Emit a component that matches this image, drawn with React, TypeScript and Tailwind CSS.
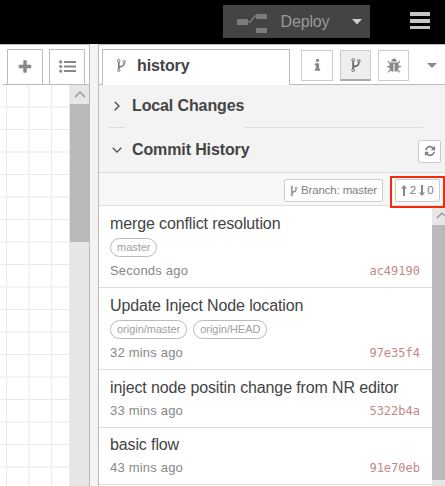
import type { ReactNode } from "react";

const paths = {
  fork: "M672 1472q0-40-28-68t-68-28-68 28-28 68 28 68 68 28 68-28 28-68zm0-1152q0-40-28-68t-68-28-68 28-28 68 28 68 68 28 68-28 28-68zm640 128q0-40-28-68t-68-28-68 28-28 68 28 68 68 28 68-28 28-68zm96 0q0 52-26 96.5t-70 69.5q-2 287-226 414-67 38-203 81-128 40-169.5 71t-41.5 100v26q44 25 70 69.5t26 96.5q0 80-56 136t-136 56-136-56-56-136q0-52 26-96.5t70-69.5v-820q-44-25-70-69.5t-26-96.5q0-80 56-136t136-56 136 56 56 136q0 52-26 96.5t-70 69.5v497q54-26 154-57 55-17 87.5-29.5t70.5-31 59-39.5 40.5-51 28-69.5 8.5-91.5q-44-25-70-69.5t-26-96.5q0-80 56-136t136-56 136 56 56 136z",
  refresh: "M1639 1056q0 5-1 7-64 268-268 434.5t-478 166.5q-146 0-282.5-55t-243.5-157l-129 129q-19 19-45 19t-45-19-19-45v-448q0-26 19-45t45-19h448q26 0 45 19t19 45-19 45l-137 137q71 66 161 102t187 36q134 0 250-65t186-179q11-17 53-117 8-23 30-23h192q13 0 22.5 9.5t9.5 22.5zm25-800v448q0 26-19 45t-45 19h-448q-26 0-45-19t-19-45 19-45l138-138q-148-137-349-137-134 0-250 65t-186 179q-11 17-53 117-8 23-30 23h-199q-13 0-22.5-9.5t-9.5-22.5v-7q65-268 270-434.5t480-166.5q146 0 284 55.5t245 156.5l130-129q19-19 45-19t45 19 19 45z",
  bug: "M1696 960q0 26-19 45t-45 19h-224q0 171-67 290l208 209q19 19 19 45t-19 45q-18 19-45 19t-45-19l-198-197q-5 5-15 13t-42 28.5-65 36.5-82 29-97 13v-896h-128v896q-51 0-101.5-13.5t-87-33-66-39-43.5-32.5l-15-14-183 207q-20 21-48 21-24 0-43-16-19-18-20.5-44.5t15.5-46.5l202-227q-58-114-58-274h-224q-26 0-45-19t-19-45 19-45 45-19h224v-294l-173-173q-19-19-19-45t19-45 45-19 45 19l173 173h844l173-173q19-19 45-19t45 19 19 45-19 45l-173 173v294h224q26 0 45 19t19 45zm-480-576h-640q0-133 93.5-226.5t226.5-93.5 226.5 93.5 93.5 226.5z",
  info: "M1216 1344v128q0 26-19 45t-45 19h-512q-26 0-45-19t-19-45v-128q0-26 19-45t45-19h64v-384h-64q-26 0-45-19t-19-45v-128q0-26 19-45t45-19h384q26 0 45 19t19 45v576h64q26 0 45 19t19 45zm-128-1152v192q0 26-19 45t-45 19h-256q-26 0-45-19t-19-45v-192q0-26 19-45t45-19h256q26 0 45 19t19 45z",
  plus: "M1600 736v192q0 40-28 68t-68 28h-416v416q0 40-28 68t-68 28h-192q-40 0-68-28t-28-68v-416h-416q-40 0-68-28t-28-68v-192q0-40 28-68t68-28h416v-416q0-40 28-68t68-28h192q40 0 68 28t28 68v416h416q40 0 68 28t28 68z",
};

function Icon({ name, className }: { name: keyof typeof paths; className: string }) {
  return (
    <svg viewBox="0 0 1792 1792" fill="currentColor" className={`shrink-0 ${className}`}>
      <path d={paths[name]} />
    </svg>
  );
}

function Header() {
  return (
    <header className="flex h-11 shrink-0 items-start bg-black pl-[223px]">
      <button className="mt-[5px] flex h-[33px] w-[147px] items-center bg-[#444] text-[#999]">
        <svg viewBox="0 0 31 22" className="ml-[14px] h-[22px] w-[31px]">
          <path d="M10 11h3l5-6h3" fill="none" stroke="#7c7c7c" strokeWidth="1.6" />
          <path d="M0 8h11v6H0zM19 3h11v5H19zM19 17h11v5H19z" fill="#7c7c7c" />
        </svg>
        <span className="ml-[12px] w-[50px] text-base tracking-[-0.15px]">Deploy</span>
        <svg viewBox="0 0 10 6" className="ml-[22px] h-[6px] w-[10px]">
          <path d="M0 0h10L5 5.5z" fill="#ccc" />
        </svg>
      </button>
      <button className="mt-3 ml-[40px] flex w-[20px] flex-col gap-[3px]">
        <span className="h-1 w-full bg-[#c7c7c7]" />
        <span className="h-1 w-full bg-[#c7c7c7]" />
        <span className="h-[3px] w-full bg-[#c7c7c7]" />
      </button>
    </header>
  );
}

function ScrollUp({ className }: { className: string }) {
  return (
    <div className={`flex shrink-0 justify-center bg-[#e6e6e6] ${className}`}>
      <svg viewBox="0 0 12 7" className="mt-[6px] h-[7px] w-[12px] shrink-0">
        <path d="M1 6l5-5 5 5" fill="none" stroke="#8c8c8c" strokeWidth="1.2" />
      </svg>
    </div>
  );
}

function Workspace() {
  return (
    <section className="flex w-[90px] shrink-0 flex-col border-t border-r border-[#bbb] bg-white">
      <div className="flex h-10 shrink-0 items-end">
        <div className="h-px w-[3px]" />
        <div className="h-px w-1 bg-[#bbb]" />
        <div className="flex h-9 w-9 items-center justify-center border border-[#bbb] text-[#888]">
          <Icon name="plus" className="size-[16px]" />
        </div>
        <div className="h-px w-[6px] bg-[#bbb]" />
        <div className="flex h-9 w-9 items-center justify-center border border-[#bbb] pb-px">
          <svg viewBox="0 0 17 13" className="h-[13px] w-[17px]" fill="#888">
            <circle cx="1.7" cy="1.9" r="1.6" />
            <circle cx="1.7" cy="6.5" r="1.6" />
            <circle cx="1.7" cy="11.1" r="1.6" />
            <path d="M5 1h12v2H5zM5 5.500h12v2H5zM5 10h12v2H5z" />
          </svg>
        </div>
        <div className="h-px w-1 bg-[#bbb]" />
      </div>
      <div className="flex min-h-0 flex-1">
        <svg className="h-full w-[70px] shrink-0">
          <defs>
            <pattern id="grid" width="45" height="45" patternUnits="userSpaceOnUse">
              <path d="M6 0h1v45H6zM0 44h45v1H0z" fill="#eaeaea" />
              <path d="M28 0h2v45h-2zM0 21h45v2H0z" fill="#f3f3f3" />
            </pattern>
          </defs>
          <rect width="69" height="100%" fill="url(#grid)" />
          <path d="M69.500 0v410" stroke="#eaeaea" />
        </svg>
        <div className="flex w-[19px] flex-col bg-[#e6e6e6]">
          <ScrollUp className="h-[19px]" />
          <div className="h-[138px] bg-[#b9b9b9]" />
        </div>
      </div>
    </section>
  );
}

function SidebarTabs() {
  return (
    <div className="flex h-10 shrink-0 items-end bg-white">
      <div className="h-px w-[3px] bg-[#bbb]" />
      <div className="flex h-9 w-[188px] items-center border-x border-t border-[#bbb] pb-1 text-[#444]">
        <Icon name="fork" className="ml-[11px] size-[15px] text-[#777]" />
        <span className="ml-[8px] text-base leading-5 font-bold tracking-[-0.12px]">history</span>
      </div>
      <div className="flex h-9 flex-1 border-b border-[#bbb] pt-px pl-[11px]">
        <div className="flex h-[31px] w-8 items-center justify-center border border-[#ccc] text-[#888]">
          <Icon name="info" className="size-[15px]" />
        </div>
        <div className="ml-[7px] flex h-[31px] w-[31px] items-center justify-center border border-b-2 border-[#ccc] border-b-[#aaa] bg-[#eee] text-[#666]">
          <Icon name="fork" className="size-[16px]" />
        </div>
        <div className="ml-[7px] flex h-[31px] w-[31px] items-center justify-center border border-[#ccc] text-[#888]">
          <Icon name="bug" className="size-[16px]" />
        </div>
        <svg viewBox="0 0 10 5" className="mt-[13px] ml-[18px] h-[5px] w-[10px] shrink-0">
          <path d="M0 0h10L5 5z" fill="#888" />
        </svg>
      </div>
    </div>
  );
}

function SmallButton({ className, children }: { className: string; children: ReactNode }) {
  return (
    <button
      className={`flex h-[23px] shrink-0 items-center rounded-[2px] border border-[#ccc] bg-white text-[11.5px] whitespace-nowrap text-[#808080] ${className}`}
    >
      {children}
    </button>
  );
}

function Arrow({ down }: { down?: boolean }) {
  return (
    <svg viewBox="0 0 6 11" className={`h-[11px] w-[6px] shrink-0 ${down ? "rotate-180" : ""}`}>
      <path d="M3 0L6 3.500H4V11H2V3.500H0z" fill="#888" />
    </svg>
  );
}

const commits = [
  { title: "merge conflict resolution", refs: ["master"], time: "Seconds ago", sha: "ac49190", height: "h-[82px] pt-2" },
  { title: "Update Inject Node location", refs: ["origin/master", "origin/HEAD"], time: "32 mins ago", sha: "97e35f4", height: "h-[82px] pt-2" },
  { title: "inject node positin change from NR editor", refs: [], time: "33 mins ago", sha: "5322b4a", height: "h-[58px] pt-2" },
  { title: "basic flow", refs: [], time: "43 mins ago", sha: "91e70eb", height: "h-[57px] pt-[7px]" },
];

function CommitList() {
  return (
    <div className="flex min-h-0 flex-1">
      <ul className="w-[333px] shrink-0 bg-white">
        {commits.map((c) => (
          <li key={c.sha} className={`flex flex-col border-b border-[#ddd] pr-3 pl-[11px] ${c.height}`}>
            <div className="h-5 text-base leading-5 tracking-[-0.12px] whitespace-nowrap text-[#444]">
              {c.title}
            </div>
            {c.refs.length > 0 && (
              <div className="mt-1 mb-px flex h-[19px] gap-[6px]">
                {c.refs.map((r) => (
                  <span
                    key={r}
                    className="rounded-full border border-[#bbb] px-[6px] text-[11px] leading-[17px] tracking-[-0.03px] text-[#a0a0a0]"
                  >
                    {r}
                  </span>
                ))}
              </div>
            )}
            <div className="mt-1 flex h-4 items-center justify-between pt-px text-[13px] leading-4 text-[#888]">
              <span className="tracking-[0.2px]">{c.time}</span>
              <span className="font-['DejaVu_Sans_Mono',monospace] text-[12px] text-[#c38888]">{c.sha}</span>
            </div>
          </li>
        ))}
      </ul>
      <div className="flex w-[13px] flex-col overflow-hidden bg-[#e6e6e6]">
        <ScrollUp className="h-[19px] w-[19px]" />
        <div className="h-[255px] bg-[#b9b9b9]" />
      </div>
    </div>
  );
}

function Sidebar() {
  return (
    <aside className="flex min-w-0 flex-1 flex-col border-t border-l border-[#bbb] bg-[#f3f3f3]">
      <SidebarTabs />
      <div className="flex h-[42px] shrink-0 items-center text-[#444]">
        <svg viewBox="0 0 6 10" className="ml-[15px] h-[10px] w-[6px]">
          <path d="M.7.7L5 5 .7 9.300" fill="none" stroke="#555" strokeWidth="1.500" />
        </svg>
        <span className="ml-[12px] text-base font-bold tracking-[-0.12px]">Local Changes</span>
      </div>
      <div className="flex h-px shrink-0 pl-[9px]">
        <div className="w-[17px] bg-[#ddd]" />
        <div className="ml-[119px] w-[179px] bg-[#ddd]" />
      </div>
      <div className="flex h-[45px] shrink-0 items-center border-b border-[#ddd] text-[#444]">
        <svg viewBox="0 0 10 6" className="ml-[13px] h-[6px] w-[10px]">
          <path d="M.7.7L5 5 9.300.7" fill="none" stroke="#555" strokeWidth="1.300" />
        </svg>
        <span className="ml-[10px] text-base font-bold tracking-[-0.12px]">Commit History</span>
        <SmallButton className="mt-[2px] mr-1 ml-auto w-[23px] justify-center">
          <Icon name="refresh" className="size-[12px]" />
        </SmallButton>
      </div>
      <div className="flex h-[33px] shrink-0 border-b border-[#ddd] bg-[#f7f7f7] pt-[6px] pl-[185px]">
        <SmallButton className="w-[99px] pl-[3px]">
          <Icon name="fork" className="size-[12px]" />
          <span className="ml-px tracking-[-0.15px]">Branch: master</span>
        </SmallButton>
        <div className="relative ml-3">
          <SmallButton className="w-[45px] justify-center gap-[2.5px]">
            <Arrow />
            <span>2</span>
            <Arrow down />
            <span>0</span>
          </SmallButton>
          <div className="absolute -top-[3px] -left-[5px] h-8 w-[55px] border-2 border-[#f52c0c]" />
        </div>
      </div>
      <CommitList />
    </aside>
  );
}

export default function App() {
  return (
    <div className="flex h-[486px] w-[445px] flex-col overflow-hidden bg-[#f3f3f3] font-['Liberation_Sans',Arial,sans-serif]">
      <Header />
      <main className="flex min-h-0 flex-1 gap-2">
        <Workspace />
        <Sidebar />
      </main>
    </div>
  );
}
